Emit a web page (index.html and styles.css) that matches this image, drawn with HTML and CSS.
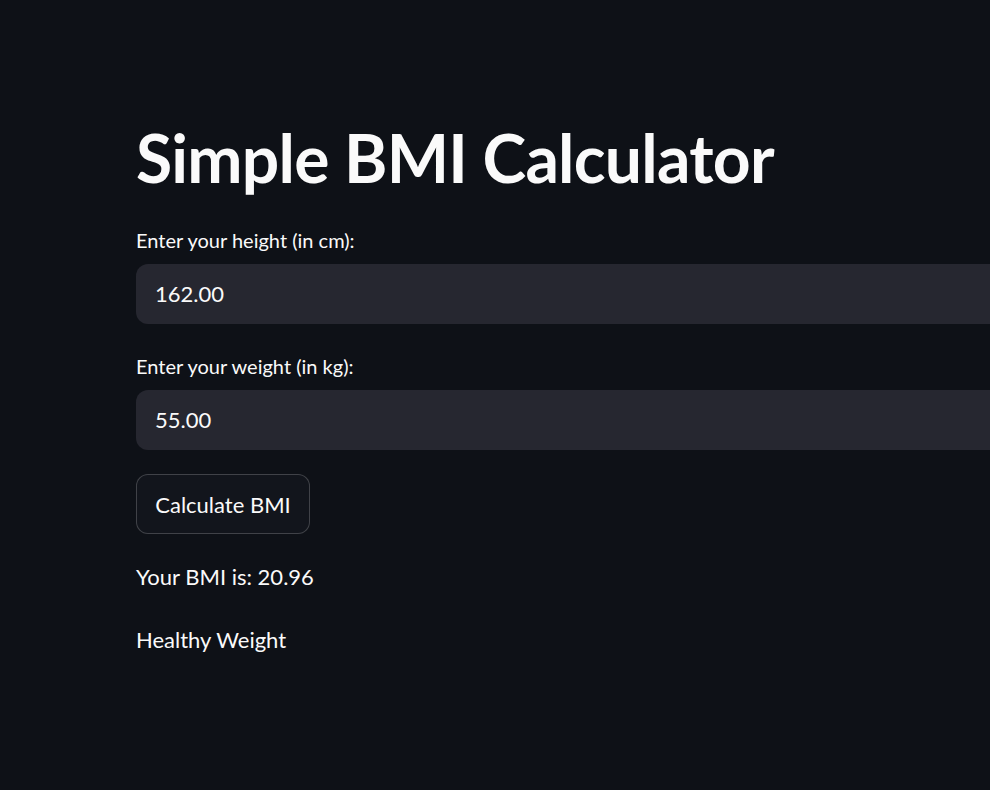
FILE: index.html
```html
<!DOCTYPE html>
<html>
<head>
<meta charset="utf-8">
<link rel="stylesheet" href="styles.css">
</head>
<body>
<main class="app">
  <h1 class="title">Simple BMI Calculator</h1>
  <label class="label label-first">Enter your height (in cm):</label>
  <div class="input">162.00</div>
  <label class="label">Enter your weight (in kg):</label>
  <div class="input">55.00</div>
  <button class="btn">Calculate BMI</button>
  <p class="text text-first">Your BMI is: 20.96</p>
  <p class="text">Healthy Weight</p>
</main>
</body>
</html>
```
FILE: styles.css
```css
html, body {
  margin: 0;
  padding: 0;
  background: #0e1117;
  overflow: hidden;
  height: 100%;
}
body {
  font-family: "Lato", "Noto Sans", sans-serif;
  color: #fafafa;
}
.app {
  box-sizing: border-box;
  width: 100%;
  padding: 118px 0 0 136px;
  display: flex;
  flex-direction: column;
  align-items: flex-start;
}
.title {
  margin: 0;
  font-size: 66px;
  line-height: 80px;
  height: 80px;
  font-weight: 700;
  letter-spacing: -0.75px;
}
.label {
  display: block;
  font-size: 20px;
  line-height: 30px;
  height: 30px;
  margin: 27px 0 9px;
}
.label-first {
  margin-top: 27px;
}
.input {
  box-sizing: border-box;
  width: 100%;
  height: 60px;
  background: #262730;
  border-radius: 12px 0 0 12px;
  padding-left: 19px;
  font-size: 22px;
  line-height: 60px;
}
.btn {
  margin-top: 24px;
  box-sizing: border-box;
  height: 60px;
  width: 174px;
  background: #12151c;
  color: #fafafa;
  border: 1px solid rgba(250, 250, 250, 0.2);
  border-radius: 12px;
  font-family: inherit;
  font-size: 22px;
  padding: 0;
}
.text {
  margin: 0;
  font-size: 22px;
  line-height: 30px;
  height: 30px;
  margin-top: 33px;
}
.text-first {
  margin-top: 28px;
}
```
